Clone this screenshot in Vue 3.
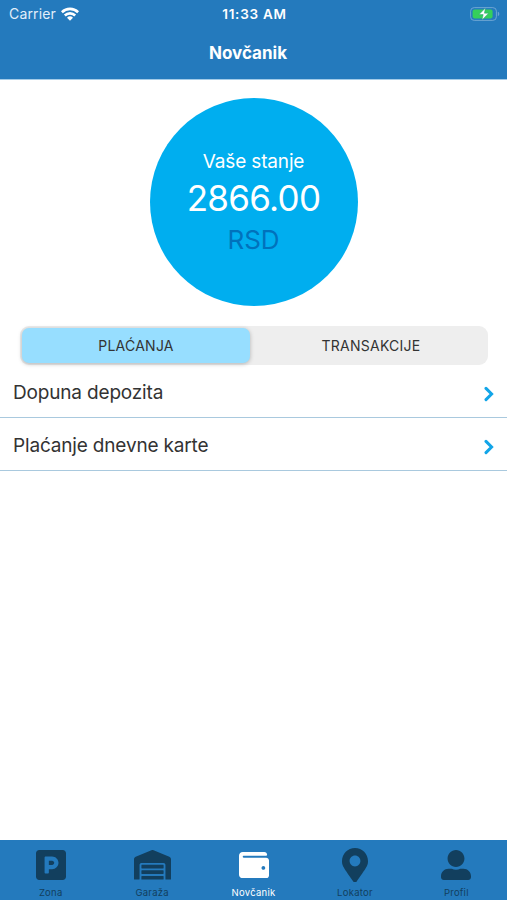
<template>
  <div class="screen">
    <header class="header">
      <div class="status">
        <div class="carrier">
          <span>Carrier</span>
          <svg class="wifi" viewBox="0 0 18 14" fill="none" stroke="#fff" stroke-width="2.6">
            <path d="M0.9 5.2a11.6 11.6 0 0 1 16.2 0" />
            <path d="M3.8 8.5a7.4 7.4 0 0 1 10.4 0" />
            <path d="M9 13.8L6 10.8a4.3 4.3 0 0 1 6 0z" fill="#fff" stroke="none" />
          </svg>
        </div>
        <div class="time">11:33 AM</div>
        <svg class="battery" viewBox="0 0 30 14">
          <rect x="0.6" y="0.6" width="25.8" height="12.8" rx="3.6" fill="none" stroke="#6da5d3" />
          <rect x="2.6" y="2.6" width="20" height="8.8" rx="1.8" fill="#35cf5b" />
          <path d="M27.8 4.8c2 .5 2 3.9 0 4.4z" fill="#6da5d3" />
          <path
            d="M15.4 1L9 7.6h4.2L12 13 18.6 6.2h-4.2z"
            fill="#fff"
            stroke="#2d9d77"
            stroke-width="0.5"
          />
        </svg>
      </div>
      <h1 class="title">Novčanik</h1>
    </header>

    <main class="content">
      <div class="balance">
        <div class="balance-label">Vaše stanje</div>
        <div class="balance-amount">2866.00</div>
        <div class="balance-currency">RSD</div>
      </div>

      <div class="segment">
        <button
          v-for="s in segments"
          :key="s"
          :class="{ active: s === segment }"
          @click="segment = s"
        >
          <span>{{ s }}</span>
        </button>
      </div>

      <ul class="list">
        <li v-for="item in items" :key="item.text">
          <span class="text">{{ item.text }}</span>
          <svg class="chevron" viewBox="0 0 10 16">
            <path d="M2 2.4l5.6 5.6L2 13.6" />
          </svg>
        </li>
      </ul>
    </main>

    <nav class="tabs">
      <a
        v-for="tab in tabs"
        :key="tab.label"
        :class="['tab', tab.name, { active: tab.name === current }]"
        @click="current = tab.name"
      >
        <span class="icon">
          <svg :viewBox="tab.box"><path :d="tab.path" /></svg>
        </span>
        <span class="label">{{ tab.label }}</span>
      </a>
    </nav>
  </div>
</template>

<script setup>
import { ref } from "vue";

const segments = ["PLAĆANJA", "TRANSAKCIJE"];
const segment = ref("PLAĆANJA");
const current = ref("wallet");

const items = [
  { text: "Dopuna depozita" },
  { text: "Plaćanje dnevne karte" },
];

const tabs = [
  {
    name: "zone",
    label: "Zona",
    box: "0 32 448 448",
    path: "M400 32H48C21.5 32 0 53.5 0 80v352c0 26.5 21.5 48 48 48h352c26.5 0 48-21.5 48-48V80c0-26.5-21.5-48-48-48zM240 320h-48v48c0 8.8-7.2 16-16 16h-32c-8.8 0-16-7.2-16-16V144c0-8.8 7.2-16 16-16h96c52.9 0 96 43.1 96 96s-43.1 96-96 96zm0-128h-48v64h48c17.6 0 32-14.4 32-32s-14.4-32-32-32z",
  },
  {
    name: "garage",
    label: "Garaža",
    box: "0 0 640 512",
    path: "M504 352H136.4c-4.4 0-8 3.6-8 8l-.1 48c0 4.4 3.6 8 8 8H504c4.4 0 8-3.6 8-8v-48c0-4.4-3.6-8-8-8zm0 96H136.1c-4.4 0-8 3.6-8 8l-.1 48c0 4.4 3.6 8 8 8h368c4.4 0 8-3.6 8-8v-48c0-4.4-3.6-8-8-8zm0-192H136.6c-4.4 0-8 3.6-8 8l-.1 48c0 4.4 3.6 8 8 8H504c4.4 0 8-3.6 8-8v-48c0-4.4-3.6-8-8-8zm106.5-139L338.4 3.7a48.15 48.15 0 0 0-36.9 0L29.5 117C11.7 124.5 0 141.9 0 161.3V504c0 4.4 3.6 8 8 8h80c4.4 0 8-3.6 8-8V256c0-17.6 14.6-32 32.6-32h382.8c18 0 32.6 14.4 32.6 32v248c0 4.4 3.6 8 8 8h80c4.4 0 8-3.6 8-8V161.3c0-19.4-11.7-36.8-29.5-44.3z",
  },
  {
    name: "wallet",
    label: "Novčanik",
    box: "0 32 512 448",
    path: "M461.2 128H80c-8.84 0-16-7.16-16-16s7.16-16 16-16h384c8.84 0 16-7.16 16-16 0-26.51-21.49-48-48-48H64C28.65 32 0 60.65 0 96v320c0 35.35 28.65 64 64 64h397.2c28.02 0 50.8-21.53 50.8-48V176c0-26.47-22.78-48-50.8-48zM416 336c-17.67 0-32-14.33-32-32s14.33-32 32-32 32 14.33 32 32-14.33 32-32 32z",
  },
  {
    name: "locator",
    label: "Lokator",
    box: "0 0 384 512",
    path: "M172.268 501.67C26.97 291.031 0 269.413 0 192 0 85.961 85.961 0 192 0s192 85.961 192 192c0 77.413-26.97 99.031-172.268 309.67-9.535 13.774-29.93 13.773-39.464 0zM192 272c44.183 0 80-35.817 80-80s-35.817-80-80-80-80 35.817-80 80 35.817 80 80 80z",
  },
  {
    name: "profile",
    label: "Profil",
    box: "0 0 512 512",
    path: "M256 288c79.5 0 144-64.5 144-144S335.5 0 256 0 112 64.5 112 144s64.5 144 144 144zm128 32h-55.1c-22.2 10.2-46.9 16-72.9 16s-50.6-5.8-72.9-16H128C57.3 320 0 377.3 0 448v16c0 26.5 21.5 48 48 48h416c26.5 0 48-21.5 48-48v-16c0-70.7-57.3-128-128-128z",
  },
];
</script>

<style>
body {
  background: #fff;
}
</style>

<style scoped>
.screen {
  display: flex;
  flex-direction: column;
  height: 100vh;
  font-family: Inter, "Liberation Sans", sans-serif;
  color: #333;
}

.header {
  height: 80px;
  box-sizing: border-box;
  background: #247abd;
  border-bottom: 1px solid #a3cbe8;
  color: #fff;
}

.status {
  display: grid;
  grid-template-columns: 1fr auto 1fr;
  align-items: center;
  height: 27px;
  padding: 0 7px 0 9px;
}

.carrier {
  display: flex;
  align-items: center;
  gap: 5.5px;
  font-size: 14px;
  letter-spacing: 0.15px;
  color: #e2eefa;
}

.wifi {
  width: 18px;
  height: 14px;
}

.time {
  font-size: 13.5px;
  font-weight: 600;
  letter-spacing: 0.75px;
}

.battery {
  justify-self: end;
  width: 30px;
  height: 14px;
}

.title {
  margin: 14.5px 0 0;
  padding-right: 11px;
  font-size: 17px;
  line-height: 22px;
  font-weight: 700;
  text-align: center;
}

.content {
  flex: 1;
}

.balance {
  width: 208px;
  height: 208px;
  margin: 18px auto 0;
  box-sizing: border-box;
  padding-top: 51px;
  border-radius: 50%;
  background: #00aeef;
  color: #fff;
  text-align: center;
}

.balance-label {
  font-size: 19px;
  line-height: 26px;
  letter-spacing: -0.15px;
}

.balance-amount {
  font-size: 35px;
  line-height: 46px;
  letter-spacing: -0.7px;
}

.balance-currency {
  font-size: 26px;
  line-height: 38px;
  color: #0072bc;
}

.segment {
  display: flex;
  height: 39px;
  box-sizing: border-box;
  margin: 20px 19px 0 20px;
  padding: 2px;
  border-radius: 9px;
  background: #eee;
}

.segment button {
  flex: 1;
  padding: 0 0 0 6px;
  border: none;
  border-radius: 7px;
  background: none;
  font-family: inherit;
  font-size: 14px;
  letter-spacing: 0.25px;
  color: #333;
}

.segment .active {
  flex: 0 0 228px;
  padding: 0;
  background: #97deff;
  box-shadow: 0 1px 4px rgba(0, 0, 0, 0.25);
}

.list {
  margin: 0;
  padding: 0;
  list-style: none;
}

.list li {
  display: flex;
  align-items: center;
  justify-content: space-between;
  height: 53px;
  box-sizing: border-box;
  padding: 0 13px;
  border-bottom: 1px solid #a9c9de;
  font-size: 19px;
  letter-spacing: -0.17px;
}

.text {
  padding-top: 2px;
}

.chevron {
  width: 10px;
  height: 16px;
  margin-top: 5px;
  fill: none;
  stroke: #12a5e8;
  stroke-width: 3;
  stroke-linecap: round;
}

.tabs {
  display: flex;
  height: 60px;
  background: #247abd;
}

.tab {
  flex: 1;
  display: flex;
  flex-direction: column;
  align-items: center;
  color: #123f5e;
  cursor: pointer;
}

.tab.active {
  color: #fff;
}

.icon {
  display: flex;
  align-items: center;
  height: 35px;
  margin-top: 7.5px;
}

.icon svg {
  display: block;
  width: 30px;
  fill: currentColor;
}

.garage .icon svg {
  width: 37px;
}

.locator .icon svg {
  width: 26px;
}

.label {
  margin-top: 3px;
  font-size: 9.5px;
  line-height: 13px;
  letter-spacing: 0.25px;
}
</style>
